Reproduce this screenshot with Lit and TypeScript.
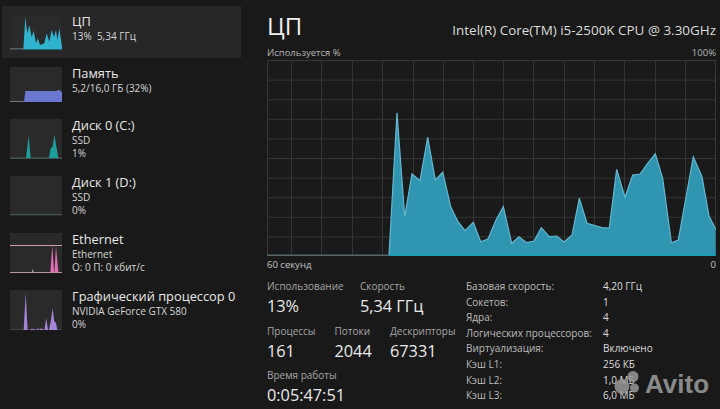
import { LitElement, html, css, svg } from "lit";
import { customElement } from "lit/decorators.js";

type Pt = [number, number];
const GW = 449, GH = 196, GX = 267, GY = 60;
const cpu: Pt[] = [[389,255.7],[397,112.7],[404.7,216.7],[412,174],[420,180.7],[427.7,137.3],[435.3,180],[442.7,172.3],[450.7,206.7],[458,221.7],[465,230.7],[473.3,222.3],[480.7,241.7],[488,239],[496,220],[503.3,206.7],[511.7,243.3],[519,236.7],[526.7,242.7],[534,241],[541.3,227.7],[549.3,236.7],[556.7,236],[564,242],[572,235],[579.3,198.3],[587,223.3],[602,227.7],[609.3,228],[616.7,169.3],[625,197.3],[632.7,175],[640,174],[647.7,163.3],[655.3,153.7],[662.7,178.3],[671.3,242.7],[678.3,240],[693.3,156.7],[702,176.7],[709,216],[715.7,229.3],[715.7,255.7]];
const vLines = [291,321,352,382,413,443,473,503,533,564,594,624,655,685];
const hLines = [1,2,3,4,5,6,7,8,9];

interface Row { title: string; sub: string[]; h: number; thumbH: number; selected?: boolean; ox: number; oy: number; shapes: { d: Pt[]; c: string }[]; lines: { y: number; c: string; x1?: number; x2?: number }[]; }

const rows: Row[] = [
  { title: "ЦП", sub: ["13%\u00a0\u00a05,34 ГГц"], h: 52, thumbH: 35, selected: true, ox: 30, oy: 45,
    shapes: [{ c: "#2fb3cf", d: [[70,147],[76,52],[82,100],[88,75],[95,112],[101,92],[108,130],[113,115],[120,135],[133,130],[140,100],[148,125],[155,90],[162,110],[168,90],[172,120],[178,85],[187,147]] }],
    lines: [{ y: 100, c: "#6d7d80", x2: 42 }, { y: 101, c: "#168ea0", x1: 42 }] },
  { title: "Память", sub: ["5,2/16,0 ГБ (32%)"], h: 52, thumbH: 35, ox: 30, oy: 198,
    shapes: [{ c: "#6a78d2", d: [[72,303],[76,270],[170,270],[177,266],[187,275],[187,303]] }],
    lines: [{ y: 102, c: "#77798a", x2: 42 }] },
  { title: "Диск 0 (C:)", sub: ["SSD", "1%"], h: 57, thumbH: 40, ox: 30, oy: 357,
    shapes: [{ c: "#1f9f9b", d: [[78,474],[86,407],[92,474]] }, { c: "#1f9f9b", d: [[147,474],[152,445],[158,440],[163,405],[170,445],[175,474]] }],
    lines: [{ y: 116, c: "#4f6a68" }] },
  { title: "Диск 1 (D:)", sub: ["SSD", "0%"], h: 57, thumbH: 40, ox: 30, oy: 20,
    shapes: [], lines: [{ y: 114, c: "#3f5557" }] },
  { title: "Ethernet", sub: ["Ethernet", "О: 0 П: 0 кбит/с"], h: 57, thumbH: 40, ox: 30, oy: 190,
    shapes: [{ c: "#e26fb3", d: [[151,308],[157,226],[162,308]] }, { c: "#e26fb3", d: [[163,308],[168,230],[175,308]] }, { c: "#c9b6c0", d: [[95,306],[98,299],[101,306]] }],
    lines: [{ y: 36, c: "#d29ab4" }, { y: 117, c: "#b9939f" }] },
  { title: "Графический процессор 0", sub: ["NVIDIA GeForce GTX 580", "0%"], h: 57, thumbH: 40, ox: 30, oy: 360,
    shapes: [{ c: "#a583d6", d: [[71,480],[77,368],[83,480]] }, { c: "#a583d6", d: [[133,480],[139,445],[144,480]] }, { c: "#a583d6", d: [[147,480],[152,455],[158,415],[163,455],[168,458],[172,480]] }, { c: "#a583d6", d: [[88,480],[95,476],[110,480],[114,474],[118,480],[124,475],[130,480]] }],
    lines: [{ y: 119, c: "#7f7790" }] },
];

const stats: [string, string][] = [
  ["Базовая скорость:", "4,20 ГГц"],
  ["Сокетов:", "1"],
  ["Ядра:", "4"],
  ["Логических процессоров:", "4"],
  ["Виртуализация:", "Включено"],
  ["Кэш L1:", "256 КБ"],
  ["Кэш L2:", "1,0 МБ"],
  ["Кэш L3:", "6,0 МБ"],
];

@customElement("app-root")
export class AppRoot extends LitElement {
  static styles = css`
    :host { display: block; width: 720px; height: 409px; background: #191919; overflow: hidden; position: relative;
      font-family: "Open Sans", "Noto Sans", sans-serif; color: #e6e6e6; }
    .page { display: flex; height: 100%; }
    .side { width: 244px; flex: none; padding: 6px 3px 0 2px; box-sizing: border-box; }
    .row { display: flex; align-items: center; padding-left: 8px; gap: 10px; }
    .row.sel { background: #272727; }
    .thumb { width: 52px; flex: none; background: #2a2a2a; display: block; }
    .txt { display: flex; flex-direction: column; align-self: flex-start; padding-top: 7px; }
    .t { font-size: 12.8px; line-height: 17px; color: #e8e8e8; white-space: nowrap; }
    .s { font-size: 10px; line-height: 13px; color: #d6d6d6; white-space: nowrap; }
    .main { width: 449px; margin-left: 23px; flex: none; display: flex; flex-direction: column; }
    .head { display: flex; justify-content: space-between; align-items: flex-end; height: 44px; padding-bottom: 2px; box-sizing: border-box; }
    .h1 { font-size: 24px; line-height: 32px; color: #eee; }
    .cpu { font-size: 13.45px; line-height: 24px; color: #ddd; white-space: nowrap; }
    .cap { display: flex; justify-content: space-between; font-size: 9.5px; line-height: 18px; height: 16px; color: #b5b5b5; }
    .graph { display: block; width: 449px; height: 196px; }
    .cap2 { display: flex; justify-content: space-between; font-size: 9.5px; line-height: 17px; height: 17px; color: #c4c4c4; }
    .foot { display: flex; margin-top: 6px; }
    .left { width: 199px; flex: none; display: flex; flex-direction: column; gap: 4.5px; }
    .st { display: flex; }
    .lab { font-size: 10px; line-height: 14px; color: #a6a6a6; white-space: nowrap; }
    .val { font-size: 16.3px; line-height: 26px; color: #eaeaea; white-space: nowrap; }
    .c1 { width: 93px; } .c2 { width: 67.5px; } .c3 { width: 55.5px; }
    .tbl { display: grid; grid-template-columns: 137px auto; grid-auto-rows: 15.6px; font-size: 10px; line-height: 15.6px; color: #bcbcbc; white-space: nowrap; }
    .tbl .v { color: #dcdcdc; }
    .avito { position: absolute; left: 613px; top: 370px; display: flex; align-items: center; gap: 4px; }
    .avito span { font-family: "Liberation Sans", sans-serif; font-weight: 700; font-size: 26px; line-height: 26px; color: #8a8a8a; }
  `;

  private thumb(r: Row) {
    const pts = (d: Pt[]) => d.map(([x, y]) => `${x - r.ox},${y - r.oy}`).join(" ");
    const H = r.thumbH * 3;
    return html`<svg class="thumb" style="height:${r.thumbH}px" viewBox="0 0 156 ${H}" preserveAspectRatio="none">
      ${r.lines.map(l => svg`<rect x=${l.x1 ?? 0} y=${l.y} width=${(l.x2 ?? 156) - (l.x1 ?? 0)} height="3" fill=${l.c}></rect>`)}
      ${r.shapes.map(s => svg`<polygon points=${pts(s.d)} fill=${s.c}></polygon>`)}
    </svg>`;
  }

  render() {
    const poly = cpu.map(([x, y]) => `${x - GX},${y - GY}`);
    const area = [`${389 - GX},${GH}`, ...poly, `${GW},${GH}`].join(" ");
    return html`<div class="page">
      <div class="side">
        ${rows.map(r => html`<div class="row ${r.selected ? "sel" : ""}" style="height:${r.h}px">
          ${this.thumb(r)}
          <div class="txt"><div class="t">${r.title}</div>${r.sub.map(s => html`<div class="s">${s}</div>`)}</div>
        </div>`)}
      </div>
      <div class="main">
        <div class="head"><div class="h1">ЦП</div><div class="cpu">Intel(R) Core(TM) i5-2500K CPU @ 3.30GHz</div></div>
        <div class="cap"><span>Используется %</span><span>100%</span></div>
        <svg class="graph" viewBox="0 0 ${GW} ${GH}">
          <rect width=${GW} height=${GH} fill="#1a1a1a"></rect>
          ${hLines.map(i => svg`<line x1="0" x2=${GW} y1=${i * 19.6 + .5} y2=${i * 19.6 + .5} stroke="#353535"></line>`)}
          ${vLines.map(x => svg`<line y1="0" y2=${GH} x1=${x - GX + .5} x2=${x - GX + .5} stroke="#353535"></line>`)}
          <rect x=".5" y=".5" width=${GW - 1} height=${GH - 1} fill="none" stroke="#383838"></rect>
          <polygon points=${area} fill="#3095b1"></polygon>
          <polyline points=${poly.slice(0, -1).join(" ")} fill="none" stroke="#66b8d0" stroke-width="1.2"></polyline>
          <rect x="0" y=${GH - 1.5} width=${389 - GX} height="1.5" fill="#56666a"></rect>
          <rect x=${389 - GX} y=${GH - 1.5} width=${GW - 389 + GX} height="1.5" fill="#11a3b5"></rect>
        </svg>
        <div class="cap2"><span>60 секунд</span><span>0</span></div>
        <div class="foot">
          <div class="left">
            <div class="st">
              <div class="c1"><div class="lab">Использование</div><div class="val">13%</div></div>
              <div><div class="lab">Скорость</div><div class="val">5,34 ГГц</div></div>
            </div>
            <div class="st">
              <div class="c2"><div class="lab">Процессы</div><div class="val">161</div></div>
              <div class="c3"><div class="lab">Потоки</div><div class="val">2044</div></div>
              <div><div class="lab">Дескрипторы</div><div class="val">67331</div></div>
            </div>
            <div class="st"><div><div class="lab">Время работы</div><div class="val">0:05:47:51</div></div></div>
          </div>
          <div class="tbl">${stats.map(([a, b]) => html`<div>${a}</div><div class="v">${b}</div>`)}</div>
        </div>
      </div>
    </div>
    <div class="avito">
      <svg width="28" height="28" viewBox="0 0 28 28" fill="#989898" fill-opacity=".85"><circle cx="20" cy="6.5" r="5.5"></circle><circle cx="9" cy="16.5" r="7.5"></circle><circle cx="21.5" cy="18" r="4.5"></circle></svg>
      <span>Avito</span>
    </div>`;
  }
}
